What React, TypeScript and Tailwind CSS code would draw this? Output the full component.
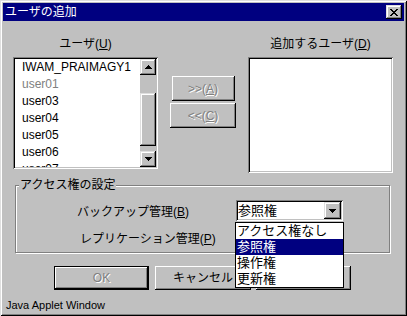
import React from "react";

const raised =
  "shadow-[inset_-1px_-1px_0_#000,inset_1px_1px_0_#fff,inset_-2px_-2px_0_#808080,inset_2px_2px_0_#c0c0c0]";
const raisedScroll =
  "shadow-[inset_-1px_-1px_0_#000,inset_1px_1px_0_#dfdfdf,inset_-2px_-2px_0_#808080,inset_2px_2px_0_#fff]";
const sunken =
  "shadow-[inset_1px_1px_0_#808080,inset_-1px_-1px_0_#fff,inset_2px_2px_0_#000,inset_-2px_-2px_0_#c0c0c0]";
const disabledText = "text-[#808080] [text-shadow:1px_1px_0_#fff]";

function Tri({ down }: { down?: boolean }) {
  return (
    <svg width="7" height="4" viewBox="0 0 7 4" shapeRendering="crispEdges">
      {down ? (
        <path d="M0 0h7v1H0z M1 1h5v1H1z M2 2h3v1H2z M3 3h1v1H3z" fill="#000" />
      ) : (
        <path d="M3 0h1v1H3z M2 1h3v1H2z M1 2h5v1H1z M0 3h7v1H0z" fill="#000" />
      )}
    </svg>
  );
}

function CloseX() {
  return (
    <svg width="8" height="7" viewBox="0 0 8 7" shapeRendering="crispEdges">
      <path
        d="M0 0h2v1H0z M6 0h2v1H6z M1 1h2v1H1z M5 1h2v1H5z M2 2h4v1H2z M3 3h2v1H3z M2 4h4v1H2z M1 5h2v1H1z M5 5h2v1H5z M0 6h2v1H0z M6 6h2v1H6z"
        fill="#000"
      />
    </svg>
  );
}

const users: { name: string; gray?: boolean }[] = [
  { name: "IWAM_PRAIMAGY1" },
  { name: "user01", gray: true },
  { name: "user03" },
  { name: "user04" },
  { name: "user05" },
  { name: "user06" },
  { name: "user07" },
];

function Combo({ value, children }: { value?: string; children?: React.ReactNode }) {
  return (
    <div className={`relative w-[107px] h-[21px] bg-white p-[2px] flex ${sunken}`}>
      <div className="flex-1 text-[13px] leading-[17px] text-black overflow-hidden whitespace-nowrap">
        {value}
      </div>
      <div className={`w-[17px] h-[17px] bg-[#c0c0c0] flex items-center justify-center ${raisedScroll}`}>
        <Tri down />
      </div>
      {children}
    </div>
  );
}

export default function App() {
  return (
    <div
      className={`w-[407px] h-[316px] bg-[#c0c0c0] p-[3px] flex flex-col text-[12px] text-black font-['Liberation_Sans','Noto_Sans_CJK_JP',sans-serif] shadow-[inset_1px_1px_0_#dfdfdf,inset_-1px_-1px_0_#000,inset_2px_2px_0_#fff,inset_-2px_-2px_0_#808080]`}
    >
      {/* Title bar */}
      <div className="h-[18px] bg-[#000080] flex items-center justify-between pl-[2px] pr-[2px]">
        <span className="text-white text-[12px] leading-[18px]">ユーザの追加</span>
        <div className={`w-[16px] h-[14px] bg-[#c0c0c0] flex items-center justify-center ${raisedScroll}`}>
          <CloseX />
        </div>
      </div>

      {/* Body */}
      <div className="flex-1 flex flex-col pt-[16px]">
        {/* Lists row */}
        <div className="flex pl-[10px] pr-[11px]">
          <div className="w-[145px] flex flex-col">
            <div className="h-[14px] leading-[14px] text-center whitespace-nowrap">
              ユーザ(<span className="underline">U</span>)
            </div>
            <div className={`mt-[6px] w-[145px] h-[112px] bg-white p-[2px] ${sunken}`}>
              <div className="flex h-full">
                <div className="flex-1 overflow-hidden pl-[7px]">
                  {users.map((u) => (
                    <div
                      key={u.name}
                      className={`h-[17px] leading-[17px] whitespace-nowrap ${u.gray ? "text-[#808080]" : "text-black"}`}
                    >
                      {u.name}
                    </div>
                  ))}
                </div>
                <div className="w-[16px] flex flex-col bg-[#c0c0c0]">
                  <div className={`h-[16px] flex items-center justify-center ${raisedScroll}`}>
                    <Tri />
                  </div>
                  <div className="flex-1 flex flex-col">
                    <div className="h-[18px]" />
                    <div className={`h-[53px] ${raisedScroll}`} />
                  </div>
                  <div className={`h-[16px] flex items-center justify-center ${raisedScroll}`}>
                    <Tri down />
                  </div>
                </div>
              </div>
            </div>
          </div>

          <div className="flex-1 flex flex-col items-center pt-[39px]">
            <div className={`w-[63px] h-[25px] flex items-center justify-center ${raised} ${disabledText}`}>
              &gt;&gt;(<span className="underline">A</span>)
            </div>
            <div className={`mt-[2px] w-[66px] h-[25px] flex items-center justify-center ${raised} ${disabledText}`}>
              &lt;&lt;(<span className="underline">C</span>)
            </div>
          </div>

          <div className="w-[145px] flex flex-col">
            <div className="h-[14px] leading-[14px] text-center whitespace-nowrap">
              追加するユーザ(<span className="underline">D</span>)
            </div>
            <div className={`mt-[6px] w-[145px] h-[116px] bg-white ${sunken}`} />
          </div>
        </div>

        {/* Access group */}
        <fieldset className="ml-[12px] mt-[5px] w-[375px] border border-[#808080] pb-[2px] shadow-[inset_1px_1px_0_#fff,1px_1px_0_#fff]">
          <legend className="ml-[3px] px-[1px] bg-[#c0c0c0] h-[14px] leading-[14px] whitespace-nowrap">
            アクセス権の設定
          </legend>
          <div className="mt-[8px] flex items-start">
            <div className="w-[220px] pl-[61px] pt-[5px] leading-[14px] whitespace-nowrap">
              バックアップ管理(<span className="underline">B</span>)
            </div>
            <Combo value="参照権">
              <div className="absolute left-[-1px] top-[22px] w-[109px] z-10 bg-white border border-black text-[13px]">
                <div className="h-[16px] leading-[16px] pl-[1px] whitespace-nowrap">アクセス権なし</div>
                <div className="h-[16px] leading-[16px] pl-[1px] whitespace-nowrap bg-[#000080] text-white">参照権</div>
                <div className="h-[16px] leading-[16px] pl-[1px] whitespace-nowrap">操作権</div>
                <div className="h-[16px] leading-[16px] pl-[1px] whitespace-nowrap">更新権</div>
              </div>
            </Combo>
          </div>
          <div className="mt-[8px] flex items-start">
            <div className="w-[220px] pl-[64px] pt-[3px] leading-[14px] whitespace-nowrap">
              レプリケーション管理(<span className="underline">P</span>)
            </div>
            <Combo />
          </div>
        </fieldset>

        {/* Buttons */}
        <div className="mt-[13px] flex">
          <div className="ml-[51px] w-[95px] h-[24px] border border-black">
            <div className={`w-full h-full flex items-center justify-center ${raised} ${disabledText}`}>OK</div>
          </div>
          <div className={`ml-[6px] w-[96px] h-[24px] flex items-center justify-center ${raised}`}>
            キャンセル
          </div>
          <div className={`ml-[5px] w-[95px] h-[24px] ${raised}`} />
        </div>

        {/* Status */}
        <div className="mt-[8px] pl-[3px] h-[14px] leading-[14px] text-[11px] whitespace-nowrap">
          Java Applet Window
        </div>
      </div>
    </div>
  );
}
